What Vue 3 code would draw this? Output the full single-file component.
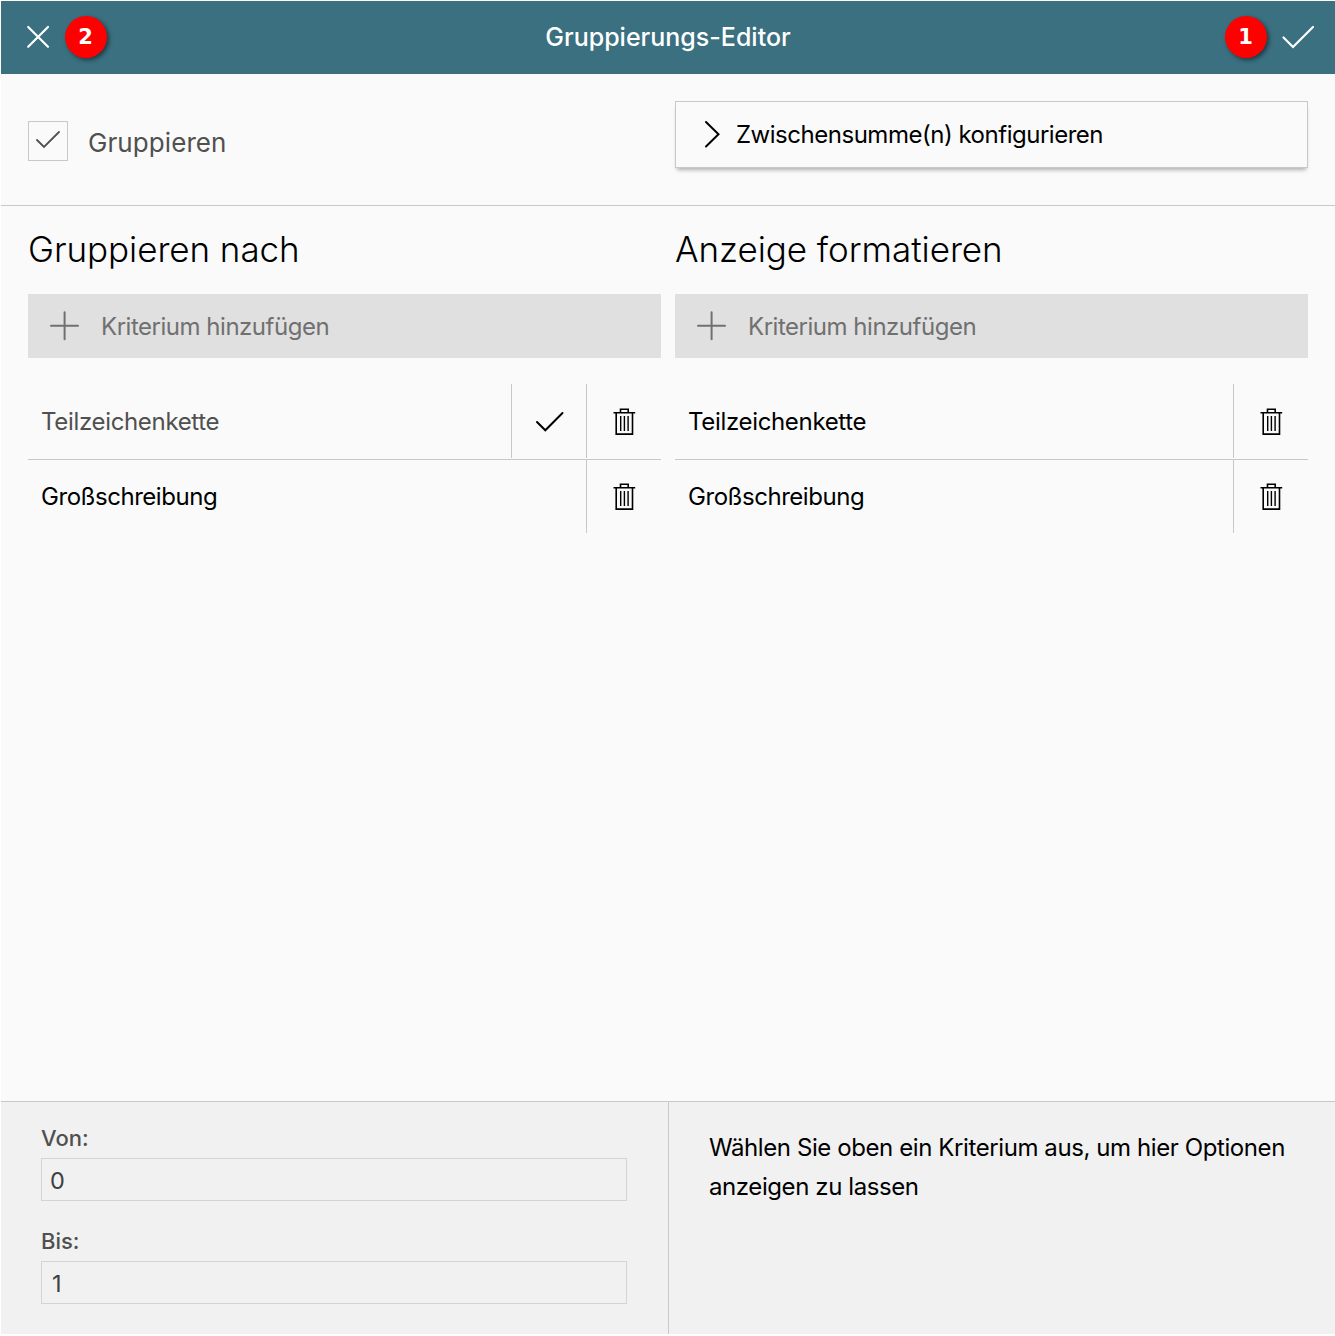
<script setup>
import { ref } from 'vue'

const columns = [
  {
    title: 'Gruppieren nach',
    rows: [
      { label: 'Teilzeichenkette', selected: true },
      { label: 'Großschreibung', selected: false },
    ],
  },
  {
    title: 'Anzeige formatieren',
    rows: [
      { label: 'Teilzeichenkette', selected: false },
      { label: 'Großschreibung', selected: false },
    ],
  },
]
const fields = ref([
  { label: 'Von:', value: '0' },
  { label: 'Bis:', value: '1' },
])
</script>

<template>
  <div class="editor">
    <header class="bar">
      <svg class="close" width="24" height="24" viewBox="0 0 24 24"><path d="M2.2 2L22 21.8M22 2L2.2 21.8" /></svg>
      <span class="badge">2</span>
      <h1>Gruppierungs-Editor</h1>
      <span class="badge confirm-badge">1</span>
      <svg class="confirm" width="32" height="24" viewBox="0 0 32 24"><path d="M1.5 12.5L11 22L31 2" /></svg>
    </header>

    <section class="top">
      <label class="group">
        <span class="box"><svg width="24" height="18" viewBox="0 0 24 18"><path d="M1 9L8 16L23 1" /></svg></span>
        <span class="group-text">Gruppieren</span>
      </label>
      <button class="subtotal">
        <svg width="16" height="28" viewBox="0 0 16 28"><path d="M2 2L14.5 14.2L2 26.5" /></svg>
        <span>Zwischensumme(n) konfigurieren</span>
      </button>
    </section>

    <main class="columns">
      <section v-for="column in columns" :key="column.title" class="column">
        <h2>{{ column.title }}</h2>
        <button class="add">
          <svg width="30" height="30" viewBox="0 0 30 30"><path d="M2 14.7H29M15.6 1.2V28.2" /></svg>
          <span>Kriterium hinzufügen</span>
        </button>
        <ul>
          <li v-for="row in column.rows" :key="row.label" :class="{ selected: row.selected }">
            <span class="label">{{ row.label }}</span>
            <span v-if="row.selected" class="cell tick-cell">
              <svg class="tick" width="30" height="22" viewBox="0 0 30 22"><path d="M3 11L11.3 19.3L28.5 2" /></svg>
            </span>
            <span class="cell">
              <svg class="trash" width="24" height="28" viewBox="0 0 24 28">
                <path d="M1.5 5.7H23.2M8.5 5.5V2.2H16.2V5.5M4.2 6V27.1H20.5V6" />
                <path class="ribs" d="M8.7 9V24M12.4 9V24M16.1 9V24" />
              </svg>
            </span>
          </li>
        </ul>
      </section>
    </main>

    <footer class="options">
      <div class="form">
        <label v-for="field in fields" :key="field.label" class="field">
          <span>{{ field.label }}</span>
          <input v-model="field.value" type="text" />
        </label>
      </div>
      <p class="hint">Wählen Sie oben ein Kriterium aus, um hier Optionen anzeigen zu lassen</p>
    </footer>
  </div>
</template>

<style>
body { background: #fff; }
</style>

<style scoped>
* { box-sizing: border-box; }
.editor {
  width: 1334px;
  height: 1333px;
  margin: 1px 0 2px 1px;
  display: flex;
  flex-direction: column;
  background: #fafafa;
  color: #000;
  font-family: Inter, "Liberation Sans", sans-serif;
  font-size: 24px;
  overflow: hidden;
}
svg { flex: none; fill: none; stroke: currentColor; stroke-width: 2; stroke-linecap: round; }
h1, h2, p, ul { margin: 0; padding: 0; font-weight: 400; }
button { font: inherit; color: inherit; text-align: left; letter-spacing: -.48px; }

.bar {
  height: 73px;
  flex: none;
  display: grid;
  grid-template-columns: 24px 42px 1fr 42px 32px;
  align-items: center;
  padding: 0 21px 2px 25px;
  column-gap: 15px;
  background: #3a7080;
  color: #fff;
}
.close, .confirm { stroke-width: 2.2; }
h1 { text-align: center; padding-left: 4px; font-size: 25px; font-weight: 500; }
.badge {
  width: 42px;
  height: 42px;
  margin-left: -.5px;
  border-radius: 50%;
  display: flex;
  align-items: center;
  justify-content: center;
  background: #f00;
  box-shadow: 2px 2px 4px rgba(0, 0, 0, .5);
  font: bold 21px "DejaVu Sans", sans-serif;
}
.confirm-badge { margin-top: 1px; }

.top {
  height: 132px;
  flex: none;
  display: grid;
  grid-template-columns: 633px 633px;
  column-gap: 14px;
  padding: 27px 27px 0;
  border-bottom: 1px solid #c8c8c8;
}
.group { display: flex; align-items: center; height: 80px; gap: 20px; color: #505050; font-size: 26px; }
.group-text { padding-top: 2px; letter-spacing: .08px; }
.box {
  width: 40px;
  height: 40px;
  padding-bottom: 2px;
  border: 1px solid #c8c8c8;
  display: flex;
  align-items: center;
  justify-content: center;
}
.box svg { stroke-width: 1.8; }
.subtotal {
  height: 67px;
  padding: 0 28px;
  display: flex;
  align-items: center;
  gap: 16px;
  background: #fafafa;
  border: 1px solid #c8c8c8;
  box-shadow: 0 4px 4px -2px rgba(0, 0, 0, .3);
}
.subtotal svg { margin-bottom: 2px; }

.columns {
  flex: 1;
  display: grid;
  grid-template-columns: 633px 633px;
  column-gap: 14px;
  padding: 0 27px;
  align-content: start;
}
h2 { height: 88px; line-height: 86px; font-size: 35px; font-weight: 300; letter-spacing: -.06px; }
.add {
  width: 100%;
  height: 64px;
  border: 0;
  padding: 0 21px;
  display: flex;
  align-items: center;
  gap: 22px;
  background: #e0e0e0;
  color: #707070;
}
ul { margin-top: 26px; list-style: none; }
li { height: 75px; display: flex; }
li + li { height: 74px; border-top: 1px solid #c8c8c8; }
.label { flex: 1; padding-left: 13px; line-height: 75px; letter-spacing: -.33px; }
li + li .label { line-height: 73px; letter-spacing: -.45px; }
.selected .label { color: #505050; }
.cell {
  width: 75px;
  height: 74px;
  padding-top: 23px;
  border-left: 1px solid #c8c8c8;
  display: flex;
  align-items: flex-start;
  justify-content: center;
}
.tick-cell { padding-top: 27px; }
li + li .cell { height: 73px; padding-top: 22px; }
.trash { stroke-width: 1.6; stroke-linecap: butt; }
.ribs { stroke-width: 1.4; }

.options {
  height: 233px;
  flex: none;
  display: grid;
  grid-template-columns: 667px 1fr;
  background: #f1f1f1;
  border-top: 1px solid #c8c8c8;
}
.form { padding: 22px 40px; }
.field { display: block; height: 103px; font-size: 22px; font-weight: 500; color: #505050; }
.field span { display: block; height: 34px; line-height: 28px; }
input {
  display: block;
  width: 586px;
  height: 43px;
  padding: 2px 8px 0;
  border: 1px solid #d4d4d4;
  background: transparent;
  color: #404040;
  font: 400 23.5px Inter, sans-serif;
}
.field + .field input { padding-left: 10px; }
.hint { padding: 26px 40px; border-left: 1px solid #c8c8c8; line-height: 39px; letter-spacing: -.41px; }
</style>
